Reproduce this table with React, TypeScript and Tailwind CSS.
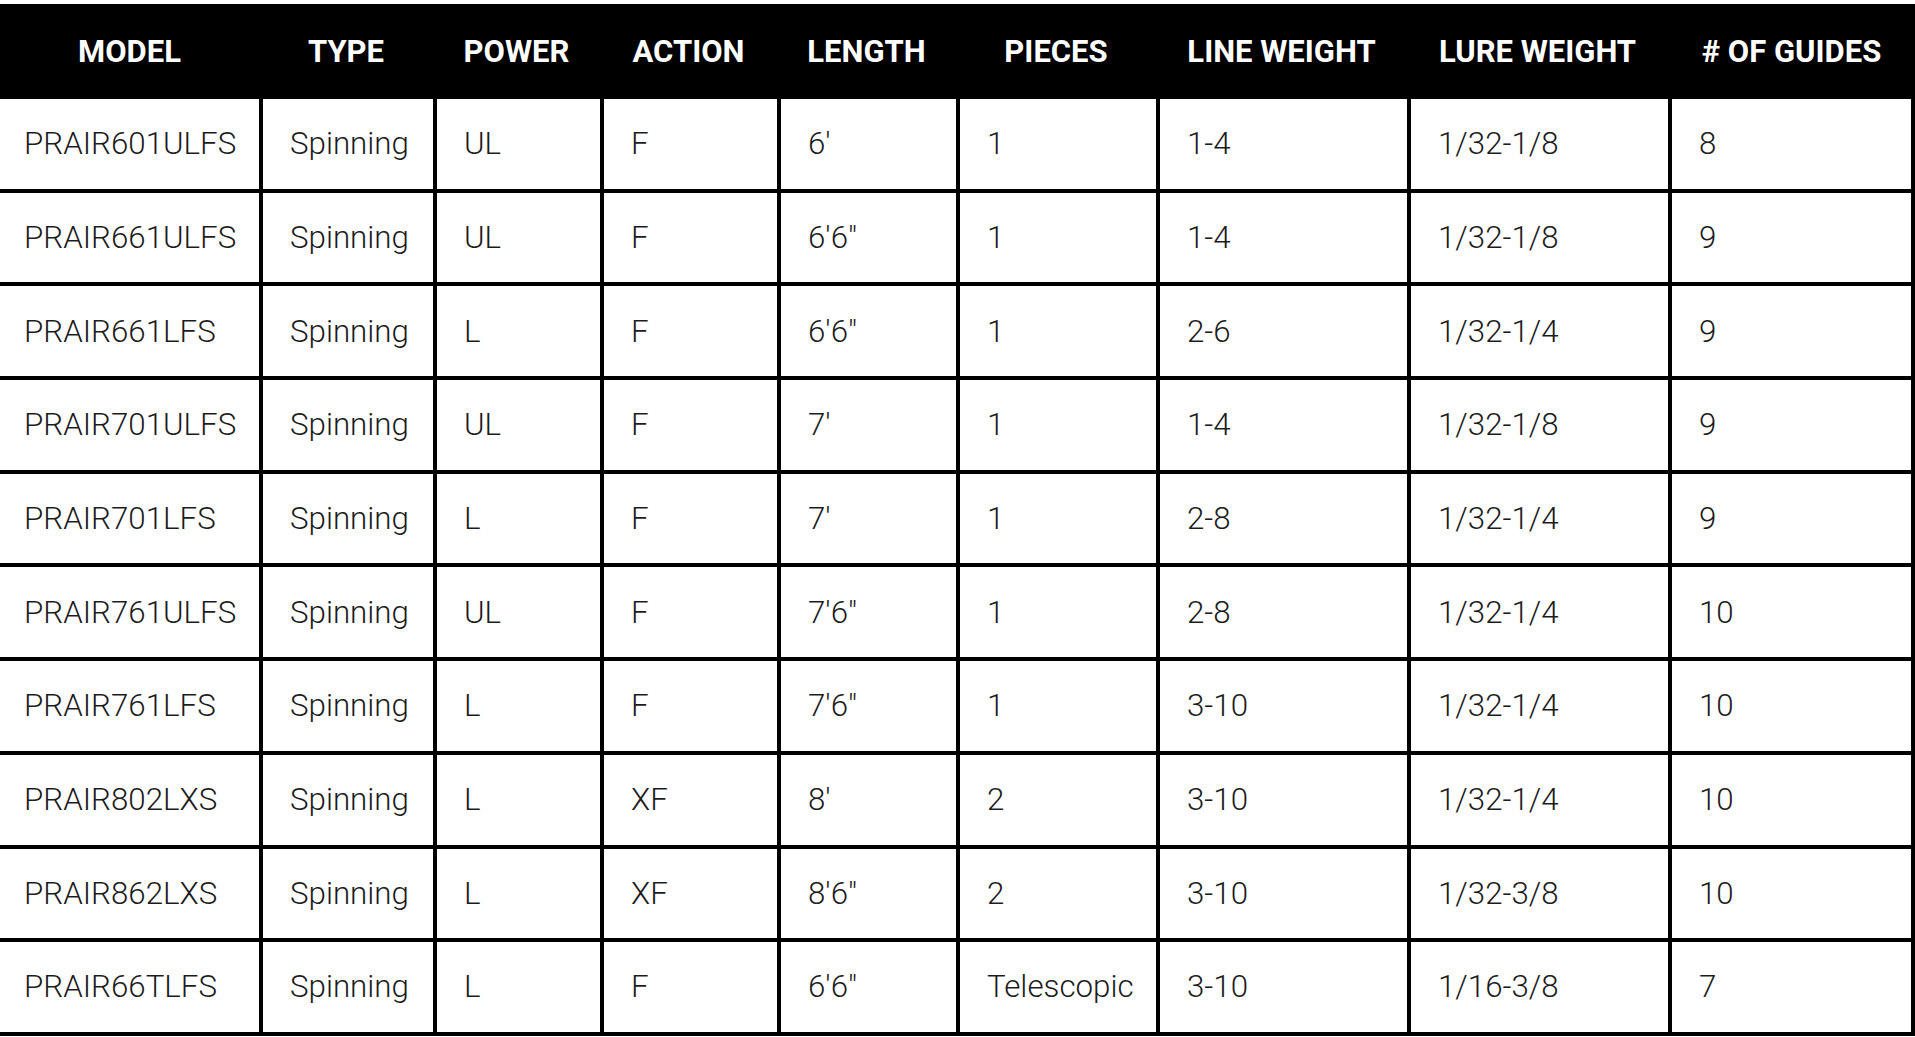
import React from "react";

const headers = [
  "MODEL",
  "TYPE",
  "POWER",
  "ACTION",
  "LENGTH",
  "PIECES",
  "LINE WEIGHT",
  "LURE WEIGHT",
  "# OF GUIDES",
];

const rows: string[][] = [
  ["PRAIR601ULFS", "Spinning", "UL", "F", "6'", "1", "1-4", "1/32-1/8", "8"],
  ["PRAIR661ULFS", "Spinning", "UL", "F", "6'6\"", "1", "1-4", "1/32-1/8", "9"],
  ["PRAIR661LFS", "Spinning", "L", "F", "6'6\"", "1", "2-6", "1/32-1/4", "9"],
  ["PRAIR701ULFS", "Spinning", "UL", "F", "7'", "1", "1-4", "1/32-1/8", "9"],
  ["PRAIR701LFS", "Spinning", "L", "F", "7'", "1", "2-8", "1/32-1/4", "9"],
  ["PRAIR761ULFS", "Spinning", "UL", "F", "7'6\"", "1", "2-8", "1/32-1/4", "10"],
  ["PRAIR761LFS", "Spinning", "L", "F", "7'6\"", "1", "3-10", "1/32-1/4", "10"],
  ["PRAIR802LXS", "Spinning", "L", "XF", "8'", "2", "3-10", "1/32-1/4", "10"],
  ["PRAIR862LXS", "Spinning", "L", "XF", "8'6\"", "2", "3-10", "1/32-3/8", "10"],
  ["PRAIR66TLFS", "Spinning", "L", "F", "6'6\"", "Telescopic", "3-10", "1/16-3/8", "7"],
];

const gridCols =
  "grid grid-cols-[259px_174px_167px_177px_179px_200px_251px_261px_247px]";

const bodyFont = { fontFamily: "'Roboto Light', Roboto, 'Noto Sans', sans-serif" };

export default function App() {
  return (
    <div
      className="w-[1915px] h-[1037px] overflow-hidden bg-white"
      style={{ fontFamily: "Roboto, 'Noto Sans', sans-serif" }}
    >
      <div className="pt-[4px]">
        <div className={`${gridCols} h-[95px] bg-black`}>
          {headers.map((h) => (
            <div
              key={h}
              className="flex items-center justify-center text-white font-bold text-[31px] leading-none"
            >
              {h}
            </div>
          ))}
        </div>
        {rows.map((r, i) => (
          <div
            key={i}
            className={`${gridCols} h-[93.7px] border-b-4 border-black`}
          >
            {r.map((c, j) => (
              <div
                key={j}
                style={bodyFont}
                className={
                  j === 0
                    ? "flex items-center pl-[24px] text-[31.3px] font-light text-[#1c1c1c] leading-none"
                    : j === 8
                    ? "flex items-center pl-[27px] border-l-4 border-r-4 border-black text-[31.3px] font-light text-[#1c1c1c] leading-none"
                    : "flex items-center pl-[27px] border-l-4 border-black text-[31.3px] font-light text-[#1c1c1c] leading-none"
                }
              >
                {c}
              </div>
            ))}
          </div>
        ))}
      </div>
    </div>
  );
}
